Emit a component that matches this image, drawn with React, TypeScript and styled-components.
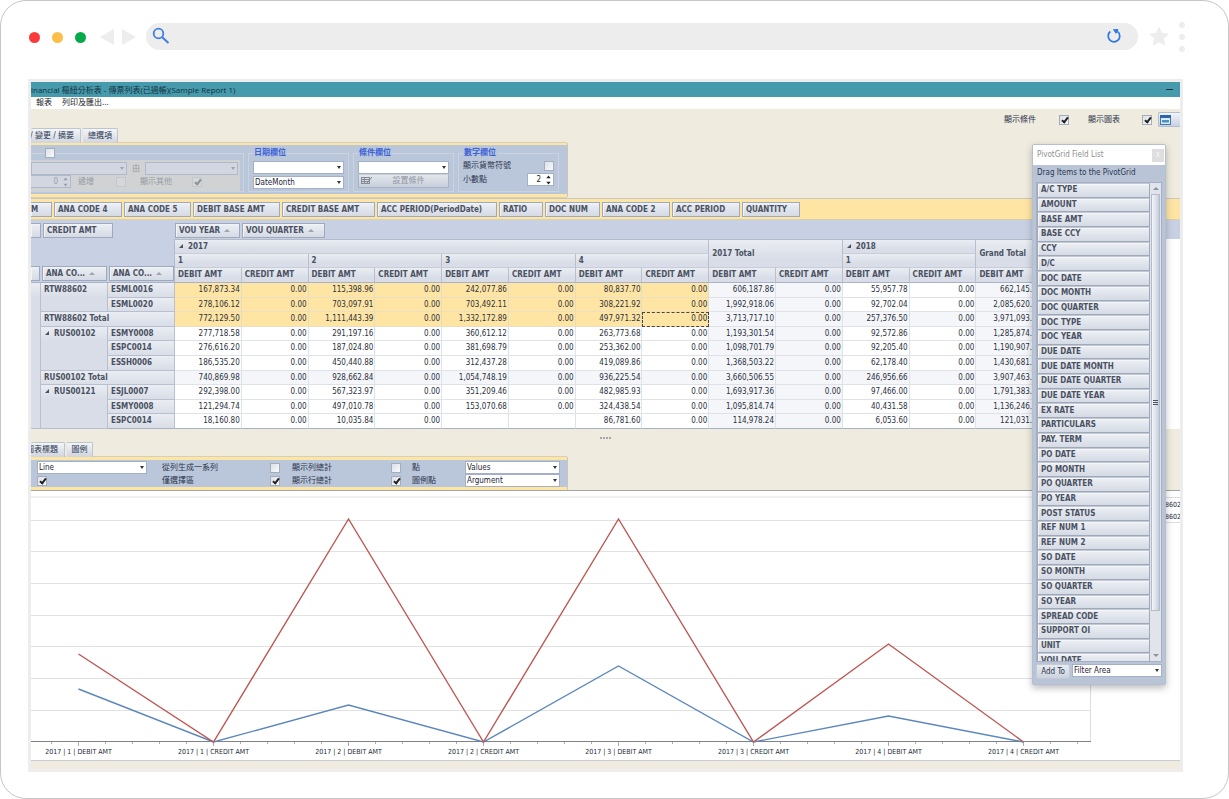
import React from "react";
import styled, { createGlobalStyle, css } from "styled-components";

const ui = `"DejaVu Sans Condensed", "DejaVu Sans", "Noto Sans CJK TC", sans-serif`;
const face = "linear-gradient(#edf0f4, #dfe3eb 55%, #d5dbe5)";

const Global = createGlobalStyle`
  *, *::before, *::after { box-sizing: border-box; }
  body { margin: 0; background: #fff; font: 8px/10px ${ui}; color: #2b3550; }
  input, select, button { font: inherit; color: inherit; margin: 0; }
`;

/* ---------- browser frame ---------- */

const Frame = styled.div`
  min-height: 100vh;
  padding: 21px 45px 24px 27px;
  border: 1px solid #c6c6c6;
  border-radius: 26px;
  background: #fff;
`;

const BrowserBar = styled.header`
  display: flex;
  align-items: center;
  height: 30px;
  margin-right: -2px;
`;

const Lights = styled.div`
  display: flex;
  gap: 12px;
  padding-left: 1px;
  margin-right: 14px;
`;

const Light = styled.span<{ $color: string }>`
  width: 11px;
  height: 11px;
  border-radius: 50%;
  background: ${(p) => p.$color};
`;

const NavArrows = styled.svg`
  width: 36px;
  height: 16px;
  margin-right: 10px;
`;

const Address = styled.div`
  flex: 1;
  height: 27px;
  margin-bottom: 2px;
  border-radius: 14px;
  background: #ededed;
  display: flex;
  align-items: center;
  justify-content: space-between;
  padding: 0 16px 0 6px;
`;

const AddressInput = styled.input`
  flex: 1;
  border: 0;
  background: none;
  outline: 0;
`;

const StarIcon = styled.svg`
  width: 22px;
  height: 22px;
  margin: 0 9px 0 10px;
`;

const Dots = styled.div`
  display: flex;
  flex-direction: column;
  gap: 6px;
`;

const Dot = styled.span`
  width: 6px;
  height: 6px;
  border-radius: 50%;
  background: #ededed;
`;

/* ---------- application window ---------- */

const Shell = styled.div`
  margin-top: 27px;
  padding: 3px;
  background: #ededed;
`;

const AppWindow = styled.main`
  position: relative;
  overflow: hidden;
  background: #efebde;
`;

const TitleBar = styled.div`
  display: flex;
  justify-content: space-between;
  align-items: center;
  height: 15px;
  padding-right: 7px;
  background: #459aac;
  font-family: "Open Sans", "Noto Sans CJK TC", sans-serif;
  color: #16303c;
`;

const Minimize = styled.button`
  width: 7px;
  height: 9px;
  padding: 0;
  border: 0;
  background: linear-gradient(#21333b, #21333b) center / 7px 1px no-repeat;
`;

const MenuBar = styled.nav`
  display: flex;
  gap: 10px;
  align-items: center;
  height: 12px;
  padding-left: 5px;
  background: #fff;
  color: #222;
`;

const MenuItem = styled.button`
  padding: 0;
  border: 0;
  background: none;
`;

const ToolRow = styled.div`
  display: flex;
  justify-content: space-between;
  height: 34px;
`;

const Tabs = styled.div`
  display: flex;
  gap: 1px;
  align-self: flex-end;
`;

const Tab = styled.button<{ $w: number; $cut?: boolean }>`
  display: flex;
  align-items: center;
  justify-content: ${(p) => (p.$cut ? "flex-end" : "center")};
  width: ${(p) => p.$w}px;
  height: 15px;
  padding: 0 ${(p) => (p.$cut ? 6 : 0)}px 0 0;
  overflow: hidden;
  white-space: nowrap;
  border: 1px solid #bfc5d0;
  border-bottom: 0;
  border-left: ${(p) => (p.$cut ? "0" : "1px solid #e4e8ee")};
  border-radius: 2px 2px 0 0;
  background: linear-gradient(#f4f6f8, #cfd5df);
`;

const Tools = styled.div`
  display: flex;
  align-items: center;
  height: 21px;
`;

const ToolLabel = styled.label`
  display: flex;
  align-items: center;
  gap: 23px;
  margin-right: 19px;
  & + & { gap: 22px; margin-right: 6px; }
`;

const LayoutButton = styled.button`
  width: 22px;
  height: 15px;
  padding: 0 0 0 1px;
  display: flex;
  align-items: center;
  border: 1px solid #b5bdcc;
  border-right: 0;
  border-radius: 2px 0 0 2px;
  background: linear-gradient(#f2f4f8, #c9d1e1);
`;

const Check = styled.input.attrs({ type: "checkbox" })`
  appearance: none;
  flex: none;
  display: block;
  position: relative;
  width: 10px;
  height: 10px;
  border: 1px solid #a4adbc;
  background: linear-gradient(135deg, #dce1e8, #f8f9fa);
  &:checked::after {
    content: "";
    position: absolute;
    left: 3px;
    top: 0;
    width: 4px;
    height: 7px;
    border: solid #222;
    border-width: 0 2px 2px 0;
    transform: rotate(38deg);
  }
  &:disabled { border-color: #c3c6ca; background: #d6d7d8; }
  &:disabled::after { border-color: #8c9097; }
`;

const Options = styled.section`
  width: 536px;
  max-width: 100%;
  border: solid #ffe5a4;
  border-width: 3px 0;
  box-shadow: 1px 0 #c9c7bd, 0 1px #d5d0bd, 0 -1px #d5d0bd;
  background: #bac6d9;
`;

const FilterOptions = styled(Options)`
  display: flex;
  gap: 4px;
  height: 54px;
  border-top-width: 2px;
  padding: 3px 0 2px;
`;

const Group = styled.fieldset<{ $grow?: boolean }>`
  width: ${(p) => (p.$grow ? 213 : 101)}px;
  min-width: 0;
  margin: 0;
  padding: 3px 4px 0;
  border: 1px solid #cbd3df;
  ${(p) => p.$grow && css`
    padding: 2px 3px 0 0;
    border-left: 0;
  `}
`;

const Legend = styled.legend<{ $indent?: boolean }>`
  height: 10px;
  padding: 0 1px;
  color: #3c62d8;
  font-weight: bold;
  margin-left: ${(p) => (p.$indent ? 13 : 0)}px;
`;

const Stack = styled.div`
  display: flex;
  flex-direction: column;
  gap: 2px;
`;

const Disabled = styled.div`
  display: grid;
  gap: 0;
  padding: 2px 1px 3px 0;
  background: #d0d2d3;
  color: #969ba5;
`;

const Line = styled.div<{ $gap?: number; $between?: boolean }>`
  display: flex;
  align-items: center;
  gap: ${(p) => p.$gap ?? 0}px;
  justify-content: ${(p) => (p.$between ? "space-between" : "flex-start")};
`;

const SelectBox = styled.span<{ $w?: number; $off?: boolean }>`
  display: block;
  position: relative;
  flex: none;
  width: ${(p) => (p.$w ? p.$w + "px" : "100%")};
  height: 13px;
  color: ${(p) => (p.$off ? "#9aa0aa" : "#1e2536")};
  &::after {
    content: "";
    position: absolute;
    right: 3px;
    top: 5px;
    border: 2px solid transparent;
    border-top: 3px solid ${(p) => (p.$off ? "#9da2ac" : "#333")};
    border-bottom: 0;
    pointer-events: none;
  }
`;

const SelectInput = styled.select`
  appearance: none;
  display: block;
  width: 100%;
  height: 100%;
  padding: 0 8px 0 1px;
  border: 1px solid #a3b0c6;
  border-radius: 0;
  background: #fff;
  &:disabled { border-color: #b0b9ca; background: #d1d6e0; opacity: 1; }
`;

function Select(p: { label: string; value?: string; w?: number; off?: boolean }) {
  return (
    <SelectBox $w={p.w} $off={p.off}>
      <SelectInput aria-label={p.label} disabled={p.off} defaultValue={p.value ?? ""}>
        <option value={p.value ?? ""}>{p.value ?? ""}</option>
      </SelectInput>
    </SelectBox>
  );
}

const SpinBox = styled.span<{ $w: number; $off?: boolean }>`
  display: flex;
  align-items: center;
  flex: none;
  width: ${(p) => p.$w}px;
  height: 13px;
  padding-right: 2px;
  border: 1px solid ${(p) => (p.$off ? "#b0b9ca" : "#a3b0c6")};
  border-left-width: ${(p) => (p.$off ? 0 : 1)}px;
  background: ${(p) => (p.$off ? "#d1d6e0" : "#fff")};
  color: ${(p) => (p.$off ? "#9aa0aa" : "#222")};
`;

const SpinInput = styled.input`
  appearance: textfield;
  flex: 1;
  min-width: 0;
  height: 11px;
  padding: 0 5px 0 0;
  border: 0;
  background: none;
  text-align: right;
  outline: 0;
  &::-webkit-inner-spin-button { display: none; }
`;

function Spin(p: { label: string; value: number; w: number; off?: boolean }) {
  return (
    <SpinBox $w={p.w} $off={p.off}>
      <SpinInput type="number" aria-label={p.label} defaultValue={p.value} disabled={p.off} />
      <svg width="5" height="10" viewBox="0 0 5 10" fill="currentColor" aria-hidden="true">
        <path d="M.3 3.200 2.500.5 4.700 3.200zM.3 6.800h4.400L2.500 9.500z" />
      </svg>
    </SpinBox>
  );
}

const ConditionButton = styled.button`
  display: flex;
  align-items: center;
  justify-content: center;
  position: relative;
  width: 100%;
  height: 14px;
  padding: 0 0 0 10px;
  border: 1px solid #a9b3c4;
  border-top-color: #c9d0da;
  border-radius: 1px;
  background: linear-gradient(#e3e7ed, #c8cfdb);
  color: #9096a1;
  svg { position: absolute; left: 2px; top: 1px; }
`;

/* ---------- pivot grid ---------- */

const Strip = styled.div`
  display: flex;
  gap: 2px;
  height: 22px;
  margin-top: 1px;
  padding: 3px 0;
  border-top: 1px solid #c9c7c6;
  border-bottom: 1px solid #dccfa9;
  background: #ffe5a4;
`;

const Chip = styled.button<{ $w: number; $cut?: boolean }>`
  display: flex;
  align-items: center;
  gap: 3px;
  flex: none;
  width: ${(p) => p.$w}px;
  height: 15px;
  padding: 0 0 0 ${(p) => (p.$cut ? 0 : 3)}px;
  overflow: hidden;
  white-space: nowrap;
  border: 1px solid #9fa9bc;
  border-left-width: ${(p) => (p.$cut ? 0 : 1)}px;
  box-shadow: inset 1px 1px #f1f4f7;
  background: ${face};
  color: #4a5162;
  font-weight: bold;
`;

const SortMark = styled.span`
  border: 3px solid transparent;
  border-bottom: 3px solid #a0a4ad;
  border-top: 0;
  margin-left: 1px;
`;

const AreaRow = styled.div`
  display: flex;
  gap: 2px;
  height: 19px;
  padding-top: 3px;
  background: #c8d1e3;
`;

const ColumnArea = styled.div`
  display: flex;
  gap: 2px;
  margin-left: 60px;
`;

const GridArea = styled.div`
  background: #fff;
`;

const Grid = styled.table`
  table-layout: fixed;
  width: 88.1%;
  border-spacing: 0;
  th, td {
    padding: 0;
    overflow: hidden;
    white-space: nowrap;
    line-height: 10px;
  }
`;

const HeadRow = styled.tr`
  height: 15px;
  &:nth-child(2) { height: 14px; }
`;

const BodyRow = styled.tr`
  height: 15px;
  &:nth-child(5n + 2), &:nth-child(5n + 4) { height: 14px; }
  &:last-child > * { border-bottom-color: #a9b2c3; }
`;

const Corner = styled.td`
  background: #c8d1e3;
  border-bottom: 1px solid #a9b2c6;
  vertical-align: bottom;
  border-right: 1px solid #b3bbcb;
`;

const CornerChips = styled.div`
  display: flex;
  gap: 2px;
  padding-bottom: 1px;
`;

const HeadCell = styled.th<{ $end?: boolean }>`
  && { padding-left: 3px; }
  text-align: left;
  color: #4a5162;
  border-right: 1px solid #b8bfce;
  border-bottom: 1px solid ${(p) => (p.$end ? "#a9b2c6" : "#c8cdd8")};
  background: linear-gradient(#eaedf2, #d8dde7 70%);
`;

const TopCell = styled(HeadCell)`
  border-top: 1px solid #b3bbcb;
`;

const RowHead = styled.th`
  && { padding-left: 3px; padding-top: 2px; }
  text-align: left;
  vertical-align: top;
  color: #4a5162;
  background: linear-gradient(#eaedf2, #d8dde7 14px);
  border-right: 1px solid #b8bfce;
  border-bottom: 1px solid #b8bfce;
`;

const Cell = styled.td<{ $tint?: "sel" | "total"; $focus?: boolean }>`
  && { padding-right: 1px; }
  text-align: right;
  color: #2b3040;
  border-right: 1px solid ${(p) => (p.$tint === "sel" ? "#e6dcc0" : "#dde3ea")};
  border-bottom: 1px solid ${(p) => (p.$tint === "sel" ? "#eadfc0" : "#dfe3e9")};
  background: ${(p) =>
    p.$tint === "sel" ? "#ffe5a4" : p.$tint === "total" ? "#f4f6f9" : "#fff"};
  ${(p) => p.$focus && css`
    outline: 1px dashed #4a4436;
    outline-offset: -1px;
  `}
`;

const Expand = styled.span`
  display: inline-block;
  width: 0;
  height: 0;
  border-left: 4px solid transparent;
  border-bottom: 4px solid #4a4f5b;
  margin: 0 5px 0 1px;
  vertical-align: 1px;
`;

/* ---------- chart ---------- */

const Splitter = styled.div`
  display: flex;
  justify-content: center;
  gap: 1px;
  height: 13px;
  padding-top: 8px;
  i { width: 2px; height: 2px; background: #a3a6ac; }
`;

const ChartOptions = styled(Options)`
  display: grid;
  grid-template-columns: 125px 108px 22px 99px 21px 53px 95px;
  align-items: center;
  height: 33px;
  padding: 1px 0 0 6px;
`;

const ChartArea = styled.section`
  border-top: 1px solid #a5a5a0;
  border-bottom: 1px solid #c9ccd3;
  background: #fff;
  svg { display: block; width: 100%; }
`;

const AxisText = styled.text`
  font: 7px ${ui};
  text-anchor: middle;
  fill: #222a38;
`;

const LegendText = styled.text`
  font: 7px ${ui};
  fill: #222a38;
`;

const StatusStrip = styled.div`
  height: 8px;
`;

/* ---------- floating field list ---------- */

const FieldList = styled.aside`
  position: absolute;
  top: 62px;
  right: 14px;
  width: 134px;
  border: 1px solid #b5bfd0;
  border-radius: 2px;
  background: #b9c5d7;
  box-shadow: 0 3px 7px rgba(60, 60, 70, 0.35);
`;

const ListTitle = styled.div`
  display: flex;
  align-items: center;
  justify-content: space-between;
  height: 20px;
  padding: 0 1px 0 4px;
  background: #fff;
  color: #909090;
`;

const Close = styled.button`
  width: 12px;
  height: 13px;
  padding: 0;
  border: 0;
  background: #dedede;
  color: #f6f6f6;
`;

const Hint = styled.div`
  padding: 3px 4px 4px;
`;

const ListBox = styled.div`
  display: flex;
  height: 480px;
  margin: 0 3px;
  border: 1px solid #a6b0c2;
  background: #eef1f5;
  overflow: hidden;
`;

const Items = styled.ul`
  flex: 1;
  display: grid;
  grid-auto-rows: 1fr;
  height: 485px;
  margin: 0;
  padding: 0;
  list-style: none;
`;

const Item = styled.li`
  display: flex;
  align-items: center;
  padding: 0 3px;
  border: 1px solid #a0a9ba;
  border-top-color: #c3c9d4;
  box-shadow: inset 1px 1px #f4f6f9;
  background: ${face};
  color: #4a5162;
  font-weight: bold;
`;

const ScrollTrack = styled.div`
  display: flex;
  flex-direction: column;
  align-items: center;
  width: 11px;
  background: #e1e4ea;
`;

const ScrollThumb = styled.div`
  display: flex;
  align-items: center;
  justify-content: center;
  width: 9px;
  height: 417px;
  border: 1px solid #b4bccb;
  background: linear-gradient(90deg, #f4f6f9, #d5dbe6 70%, #c2cad8);
  color: #4c525e;
`;

const ScrollArrow = styled.span<{ $down?: boolean }>`
  margin: ${(p) => (p.$down ? "auto 0 4px" : "4px 0 4px")};
  border: 3px solid transparent;
  ${(p) => (p.$down ? "border-top: 3px solid #8d929c; border-bottom: 0;" : "border-bottom: 3px solid #8d929c; border-top: 0;")}
`;

const ListFooter = styled.div`
  display: flex;
  gap: 2px;
  padding: 2px 3px 5px;
`;

const AddButton = styled.button`
  width: 34px;
  height: 15px;
  padding: 0;
  border: 1px solid #c3cad7;
  border-radius: 2px;
  background: linear-gradient(#e8ebf0, #ccd3df);
`;

/* ---------- data ---------- */

const filterFields: [string, number][] = [
  ["ANA CODE 4", 68], ["ANA CODE 5", 67], ["DEBIT BASE AMT", 87], ["CREDIT BASE AMT", 93],
  ["ACC PERIOD(PeriodDate)", 120], ["RATIO", 44], ["DOC NUM", 55], ["ANA CODE 2", 68],
  ["ACC PERIOD", 68], ["QUANTITY", 58],
];

const Z = "0.00";
type Row = { group?: [string, number]; total?: string; code?: string; v: string[] };
const rows: Row[] = [
  { group: ["RTW88602", 2], code: "ESML0016", v: ["167,873.34", Z, "115,398.96", Z, "242,077.86", Z, "80,837.70", Z, "606,187.86", Z, "55,957.78", Z, "662,145.64"] },
  { code: "ESML0020", v: ["278,106.12", Z, "703,097.91", Z, "703,492.11", Z, "308,221.92", Z, "1,992,918.06", Z, "92,702.04", Z, "2,085,620.10"] },
  { total: "RTW88602 Total", v: ["772,129.50", Z, "1,111,443.39", Z, "1,332,172.89", Z, "497,971.32", Z, "3,713,717.10", Z, "257,376.50", Z, "3,971,093.60"] },
  { group: ["RUS00102", 3], code: "ESMY0008", v: ["277,718.58", Z, "291,197.16", Z, "360,612.12", Z, "263,773.68", Z, "1,193,301.54", Z, "92,572.86", Z, "1,285,874.40"] },
  { code: "ESPC0014", v: ["276,616.20", Z, "187,024.80", Z, "381,698.79", Z, "253,362.00", Z, "1,098,701.79", Z, "92,205.40", Z, "1,190,907.19"] },
  { code: "ESSH0006", v: ["186,535.20", Z, "450,440.88", Z, "312,437.28", Z, "419,089.86", Z, "1,368,503.22", Z, "62,178.40", Z, "1,430,681.62"] },
  { total: "RUS00102 Total", v: ["740,869.98", Z, "928,662.84", Z, "1,054,748.19", Z, "936,225.54", Z, "3,660,506.55", Z, "246,956.66", Z, "3,907,463.21"] },
  { group: ["RUS00121", 3], code: "ESJL0007", v: ["292,398.00", Z, "567,323.97", Z, "351,209.46", Z, "482,985.93", Z, "1,693,917.36", Z, "97,466.00", Z, "1,791,383.36"] },
  { code: "ESMY0008", v: ["121,294.74", Z, "497,010.78", Z, "153,070.68", Z, "324,438.54", Z, "1,095,814.74", Z, "40,431.58", Z, "1,136,246.32"] },
  { code: "ESPC0014", v: ["18,160.80", Z, "10,035.84", Z, "", "", "86,781.60", Z, "114,978.24", Z, "6,053.60", Z, "121,031.84"] },
];

const fields = [
  "A/C TYPE", "AMOUNT", "BASE AMT", "BASE CCY", "CCY", "D/C", "DOC DATE", "DOC MONTH", "DOC QUARTER",
  "DOC TYPE", "DOC YEAR", "DUE DATE", "DUE DATE MONTH", "DUE DATE QUARTER", "DUE DATE YEAR", "EX RATE",
  "PARTICULARS", "PAY. TERM", "PO DATE", "PO MONTH", "PO QUARTER", "PO YEAR", "POST STATUS", "REF NUM 1",
  "REF NUM 2", "SO DATE", "SO MONTH", "SO QUARTER", "SO YEAR", "SPREAD CODE", "SUPPORT OI", "UNIT", "VOU DATE",
];

const axis = [1, 2, 3, 4].flatMap((q) => [`2017 | ${q} | DEBIT AMT`, `2017 | ${q} | CREDIT AMT`]);
const red = [163, 251, 28, 251, 28, 251, 153, 251];
const blue = [198, 251, 214, 251, 175, 251, 225, 251];
const px = (i: number) => 47.5 + i * 135;
const line = (ys: number[]) => ys.map((y, i) => `${px(i)},${y}`).join(" ");

function tintOf(r: number, c: number): "sel" | "total" | undefined {
  if (r < 3 && c < 8) return "sel";
  if (c === 8 || c === 9 || c === 12 || rows[r].total) return "total";
  return undefined;
}

function Chart() {
  return (
    <svg viewBox="0 0 1149 269" role="img" aria-label="Debit and credit by quarter">
      <rect x="0" y="5" width="1060" height="2" fill="#f0f0f1" />
      {[29, 60, 92, 124, 155, 187, 219].map((y) => (
        <rect key={y} x="0" y={y} width="1060" height="1" fill="#e2e2e3" />
      ))}
      <rect x="1059" y="6" width="1" height="244" fill="#dcdcde" />
      {Array.from({ length: 39 }, (_, i) => (
        <rect key={i} x={20 + i * 27} y="251" width="1" height={(i - 1) % 5 === 0 ? 4 : 2} fill="#a9abb0" />
      ))}
      <rect x="0" y="250" width="1060" height="1" fill="#7f8287" />
      <polyline points={line(blue)} fill="none" stroke="#5b87bd" strokeWidth="1.4" />
      <polyline points={line(red)} fill="none" stroke="#bf5551" strokeWidth="1.4" />
      {axis.map((t, i) => (
        <AxisText key={t} x={px(i)} y="263">{t}</AxisText>
      ))}
      <rect x="1110" y="6" width="39" height="1" fill="#dedee0" />
      <rect x="1110" y="31" width="39" height="1" fill="#dedee0" />
      <LegendText x="1134" y="16">8602</LegendText>
      <LegendText x="1134" y="28">8602</LegendText>
    </svg>
  );
}

function PivotTable() {
  return (
    <Grid>
      <colgroup>
        <col style={{ width: 10 }} />
        <col style={{ width: 67 }} />
        <col style={{ width: 67 }} />
        {rows[0].v.map((_, i) => <col key={i} />)}
      </colgroup>
      <thead>
        <HeadRow>
          <Corner rowSpan={3} colSpan={3}>
            <CornerChips>
              <Chip $w={9} $cut aria-label="Row field" />
              <Chip $w={65}>ANA CO... <SortMark /></Chip>
              <Chip $w={65}>ANA CO... <SortMark /></Chip>
            </CornerChips>
          </Corner>
          <TopCell colSpan={8}><Expand />2017</TopCell>
          <TopCell colSpan={2} rowSpan={2}>2017 Total</TopCell>
          <TopCell colSpan={2}><Expand />2018</TopCell>
          <TopCell rowSpan={2}>Grand Total</TopCell>
        </HeadRow>
        <HeadRow>
          {["1", "2", "3", "4", "1"].map((q, i) => <HeadCell key={i} colSpan={2}>{q}</HeadCell>)}
        </HeadRow>
        <HeadRow>
          {rows[0].v.map((_, i) => (
            <HeadCell $end key={i}>{i % 2 ? "CREDIT AMT" : "DEBIT AMT"}</HeadCell>
          ))}
        </HeadRow>
      </thead>
      <tbody>
        {rows.map((r, ri) => (
          <BodyRow key={ri}>
            {ri === 0 && <RowHead rowSpan={10} />}
            {r.group && (
              <RowHead rowSpan={r.group[1]}>
                {ri > 0 && <Expand />}
                {r.group[0]}
              </RowHead>
            )}
            {r.total ? <RowHead colSpan={2}>{r.total}</RowHead> : <RowHead>{r.code}</RowHead>}
            {r.v.map((v, ci) => (
              <Cell key={ci} $tint={tintOf(ri, ci)} $focus={ri === 2 && ci === 7}>{v}</Cell>
            ))}
          </BodyRow>
        ))}
      </tbody>
    </Grid>
  );
}

export default function App() {
  return (
    <>
      <Global />
      <Frame>
        <BrowserBar>
          <Lights>
            <Light $color="#fb3b3b" />
            <Light $color="#fdbd49" />
            <Light $color="#06a94b" />
          </Lights>
          <NavArrows viewBox="0 0 36 16" fill="#ededed" aria-hidden="true">
            <path d="M14 0v16L0 8zM22 0v16l14-8z" />
          </NavArrows>
          <Address>
            <svg width="18" height="18" viewBox="0 0 18 18" fill="none" stroke="#3f7fe0" aria-hidden="true">
              <circle cx="6.5" cy="6.5" r="4.8" strokeWidth="1.8" />
              <path d="M10 10l6.5 6" strokeWidth="2" />
            </svg>
            <AddressInput aria-label="Address" />
            <svg width="16" height="16" viewBox="0 0 16 16" fill="none" stroke="#2f78e0" aria-hidden="true">
              <path d="M4.300 3.500A5.800 5.800 0 1 0 12 3.800" strokeWidth="1.700" />
              <path d="M6.800 1.200 12.300 1 11.800 4.200 9.800 5.800z" fill="#2f78e0" stroke="none" />
            </svg>
          </Address>
          <StarIcon viewBox="0 0 22 22" fill="#ededed" stroke="#ededed" strokeLinejoin="round" aria-hidden="true">
            <path d="M11 1.500l2.700 6 6.500.7-4.900 4.300 1.400 6.500L11 15.700l-5.700 3.300 1.400-6.500L1.800 8.200l6.500-.7z" />
          </StarIcon>
          <Dots><Dot /><Dot /><Dot /></Dots>
        </BrowserBar>

        <Shell>
          <AppWindow>
            <TitleBar>
              <span>inancial 樞紐分析表 - 傳票列表(已過帳)(Sample Report 1)</span>
              <Minimize aria-label="Minimize" />
            </TitleBar>
            <MenuBar>
              <MenuItem>報表</MenuItem>
              <MenuItem>列印及匯出...</MenuItem>
            </MenuBar>
            <ToolRow>
              <Tabs>
                <Tab $w={50} $cut>/ 變更 / 摘要</Tab>
                <Tab $w={36}>總選項</Tab>
              </Tabs>
              <Tools>
                <ToolLabel>顯示條件<Check defaultChecked /></ToolLabel>
                <ToolLabel>顯示圖表<Check defaultChecked /></ToolLabel>
                <LayoutButton aria-label="Layout">
                  <svg width="11" height="10" viewBox="0 0 11 10" aria-hidden="true">
                    <rect x=".5" y=".5" width="10" height="9" fill="#d7ecf8" stroke="#3f78b0" />
                    <rect x="0" y="0" width="11" height="3" fill="#2c66a8" />
                    <path d="M2 5h7v2.500H2z" fill="#4d93bb" />
                  </svg>
                </LayoutButton>
              </Tools>
            </ToolRow>

            <FilterOptions>
              <Group $grow>
                <Legend $indent><Check aria-label="Top values" /></Legend>
                <Disabled>
                  <Line $gap={5}>
                    <Select label="Field" w={96} off />
                    <span>由</span>
                    <Select label="From" w={93} off />
                  </Line>
                  <Line $gap={7}>
                    <Spin label="Count" value={0} w={40} off />
                    <Line as="label" $gap={22}>遞增<Check disabled /></Line>
                    <span />
                    <Line as="label" $gap={20}>顯示其他<Check disabled defaultChecked /></Line>
                  </Line>
                </Disabled>
              </Group>
              <Group>
                <Legend>日期欄位</Legend>
                <Stack>
                  <Select label="日期欄位" />
                  <Select label="日期單位" value="DateMonth" />
                </Stack>
              </Group>
              <Group>
                <Legend>條件欄位</Legend>
                <Select label="條件欄位" />
                <ConditionButton disabled>
                  <svg width="12" height="9" viewBox="0 0 12 9" fill="none" stroke="#858b96" aria-hidden="true">
                    <rect x=".5" y="1.500" width="8" height="6" />
                    <path d="M0 3.500h9M0 5.500h9M3.500 1.500v6M6 7l5-6" />
                  </svg>
                  設置條件
                </ConditionButton>
              </Group>
              <Group>
                <Legend>數字欄位</Legend>
                <Stack>
                  <Line as="label" $between>顯示貨幣符號<Check /></Line>
                  <Line as="label" $between>小數點<Spin label="小數點" value={2} w={27} /></Line>
                </Stack>
              </Group>
            </FilterOptions>

            <Strip>
              <Chip $w={21} $cut>M</Chip>
              {filterFields.map(([name, w]) => <Chip key={name} $w={w}>{name}</Chip>)}
            </Strip>

            <AreaRow>
              <Chip $w={10} $cut aria-label="Data field" />
              <Chip $w={70}>CREDIT AMT</Chip>
              <ColumnArea>
                <Chip $w={65}>VOU YEAR <SortMark /></Chip>
                <Chip $w={83}>VOU QUARTER <SortMark /></Chip>
              </ColumnArea>
            </AreaRow>
            <GridArea><PivotTable /></GridArea>

            <Splitter><i /><i /><i /><i /></Splitter>
            <Tabs>
              <Tab $w={34} $cut>圖表標題</Tab>
              <Tab $w={27}>圖例</Tab>
            </Tabs>
            <ChartOptions>
              <Select label="Chart type" value="Line" w={110} />
              <label htmlFor="by-column">從列生成一系列</label>
              <Check id="by-column" />
              <label htmlFor="row-totals">顯示列總計</label>
              <Check id="row-totals" />
              <span>點</span>
              <Select label="點" value="Values" />
              <Check aria-label="Labels" defaultChecked />
              <label htmlFor="selection-only">僅選擇區</label>
              <Check id="selection-only" defaultChecked />
              <label htmlFor="line-totals">顯示行總計</label>
              <Check id="line-totals" defaultChecked />
              <span>圖例點</span>
              <Select label="圖例點" value="Argument" />
            </ChartOptions>
            <ChartArea><Chart /></ChartArea>
            <StatusStrip />

            <FieldList>
              <ListTitle>
                PivotGrid Field List
                <Close aria-label="Close">x</Close>
              </ListTitle>
              <Hint>Drag Items to the PivotGrid</Hint>
              <ListBox>
                <Items>{fields.map((f) => <Item key={f}>{f}</Item>)}</Items>
                <ScrollTrack>
                  <ScrollArrow />
                  <ScrollThumb>
                    <svg width="5" height="6" viewBox="0 0 5 6" stroke="currentColor" aria-hidden="true">
                      <path d="M0 .5h5M0 2.500h5M0 4.500h5" />
                    </svg>
                  </ScrollThumb>
                  <ScrollArrow $down />
                </ScrollTrack>
              </ListBox>
              <ListFooter>
                <AddButton>Add To</AddButton>
                <Select label="Area" value="Filter Area" w={90} />
              </ListFooter>
            </FieldList>
          </AppWindow>
        </Shell>
      </Frame>
    </>
  );
}
